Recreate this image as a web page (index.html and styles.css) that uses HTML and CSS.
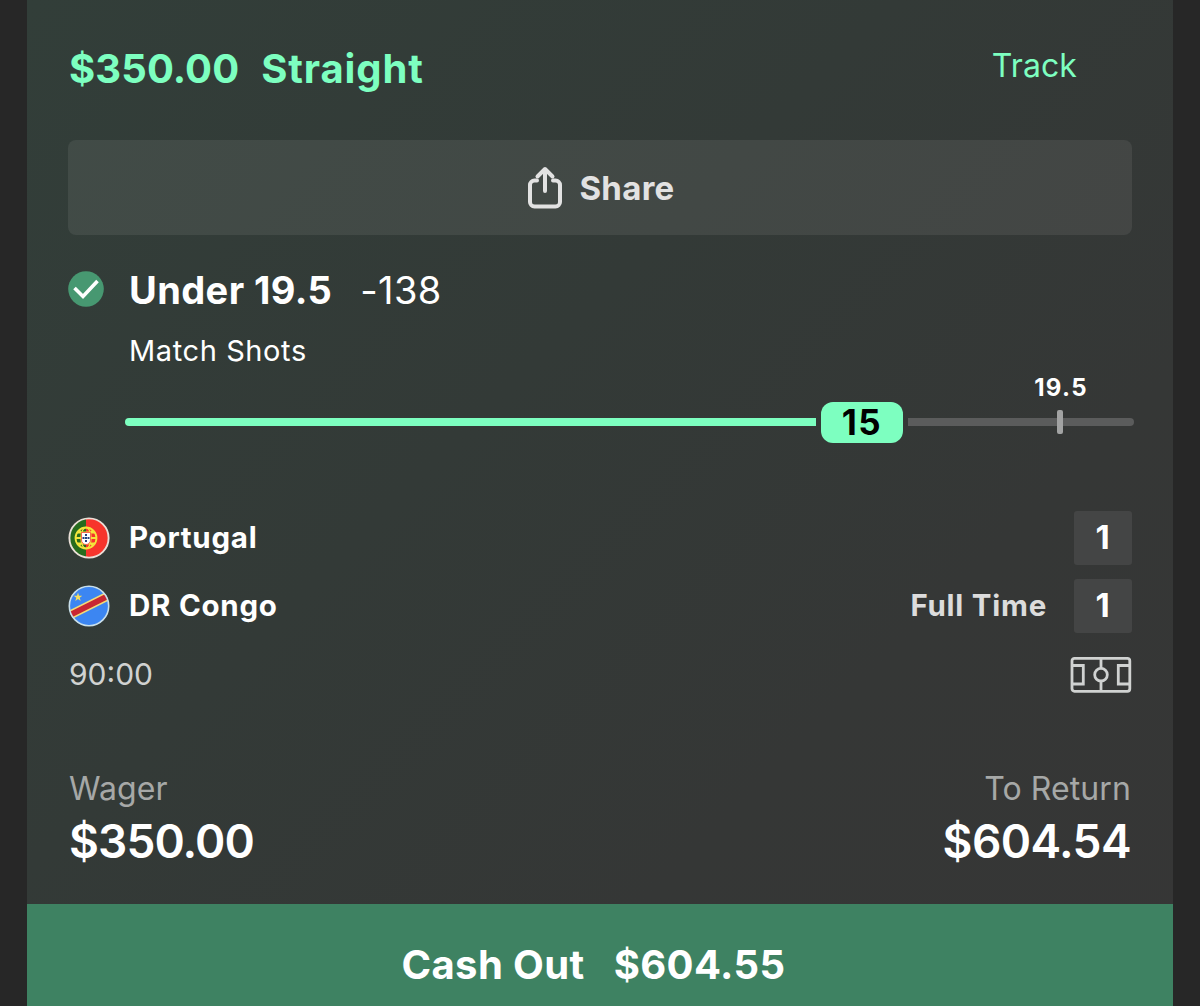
FILE: index.html
```
<!DOCTYPE html>
<html lang="en">
<head>
    <meta charset="UTF-8">
    <meta name="viewport" content="width=device-width, initial-scale=1.0">
    <title>My Bets</title>
    <link rel="stylesheet" href="styles.css">
</head>
<body>
    <div class="card">
        <div class="content">
            <header class="header">
                <h1><span class="stake">$350.00</span><span class="type">Straight</span></h1>
                <a class="track-link">Track</a>
            </header>

            <button class="share">
                <svg width="36" height="44" viewBox="0 0 36 44" fill="none" stroke="#e2e2e2" stroke-width="4" stroke-linecap="round" stroke-linejoin="round">
                    <path d="M10 14.500H7.500a4.500 4.500 0 0 0-4.500 4.500V36a4.500 4.500 0 0 0 4.500 4.500h21a4.500 4.500 0 0 0 4.500-4.500V19a4.500 4.500 0 0 0-4.500-4.500H26"/>
                    <path d="M18 25V3.500M10.500 10.500L18 3l7.500 7.500"/>
                </svg>
                <span>Share</span>
            </button>

            <section class="selection">
                <svg class="check" width="36" height="36" viewBox="0 0 36 36">
                    <circle cx="18" cy="18" r="17.800" fill="#479871"/>
                    <path d="M6.500 17l8.500 8.500L29.500 10" fill="none" stroke="#fff" stroke-width="3.600"/>
                </svg>
                <div class="pick"><strong>Under 19.5</strong><span class="odds">-138</span></div>
                <div class="market">Match Shots</div>
            </section>

            <div class="progress">
                <div class="fill"></div>
                <div class="current">15</div>
                <div class="rest">
                    <div class="target"><span>19.5</span></div>
                </div>
            </div>

            <section class="match">
                <div class="team">
                    <svg class="flag" width="42" height="42" viewBox="0 0 42 42">
                        <clipPath id="round"><circle cx="21" cy="21" r="20"/></clipPath>
                        <g clip-path="url(#round)">
                            <rect width="42" height="42" fill="#f7342c"/>
                            <rect width="18" height="42" fill="#276b1e"/>
                            <g fill="none" stroke="#f4e53c">
                                <circle cx="18" cy="21" r="10.500" stroke-width="1.800"/>
                                <ellipse cx="18" cy="21" rx="5" ry="10.500" stroke-width="1.300"/>
                                <path d="M8 21h20M9 15.500h18M9 26.500h18M11 13l14 16M25 13L11 29" stroke-width="1.800"/>
                            </g>
                            <path d="M13.500 15.500h9V23a4.500 4.500 0 0 1-9 0z" fill="#fff" stroke="#f7342c" stroke-width="0.700"/>
                            <path d="M17 17h2v2h-2zM17 20h2v2h-2zM17 23h2v2h-2zM14.500 20h2v2h-2zM19.500 20h2v2h-2z" fill="#26437f"/>
                        </g>
                        <circle cx="21" cy="21" r="19.600" fill="none" stroke="#e9dfd8" stroke-width="1.900"/>
                    </svg>
                    <span class="name">Portugal</span>
                    <span class="score">1</span>
                </div>
                <div class="team">
                    <svg class="flag" width="42" height="42" viewBox="0 0 42 42">
                        <g clip-path="url(#round)">
                            <rect width="42" height="42" fill="#3c86f2"/>
                            <path d="M-2 32L44 9" stroke="#f3dc77" stroke-width="9"/>
                            <path d="M-2 32L44 9" stroke="#c92732" stroke-width="6"/>
                            <path d="M10 7.500l1 3.200h3.300l-2.600 2 1 3.300-2.700-2-2.700 2 1-3.300-2.600-2H9z" fill="#f6df5d"/>
                        </g>
                        <circle cx="21" cy="21" r="19.700" fill="none" stroke="#c9dfe9" stroke-width="1.600"/>
                    </svg>
                    <span class="name">DR Congo</span>
                    <span class="status">Full Time</span>
                    <span class="score">1</span>
                </div>
                <div class="clock">
                    <span>90:00</span>
                    <svg width="62" height="37" viewBox="0 0 62 37" fill="none" stroke="#d0d2d1" stroke-width="2.800">
                        <rect x="2" y="2.300" width="57.800" height="33" rx="2.500"/>
                        <path d="M31 2v10M31 25.500V35M2.500 9.500h10.800v18.500H2.500M59.500 9.500H48.300v18.500H59.500"/>
                        <circle cx="31" cy="18.700" r="6.300"/>
                    </svg>
                </div>
            </section>

            <section class="totals">
                <div class="total">
                    <div class="label">Wager</div>
                    <div class="amount">$350.00</div>
                </div>
                <div class="total right">
                    <div class="label">To Return</div>
                    <div class="amount">$604.54</div>
                </div>
            </section>
        </div>

        <button class="cash-out"><span>Cash Out</span><span>$604.55</span></button>
    </div>
</body>
</html>
```

FILE: styles.css
```
* {
    box-sizing: border-box;
}
body {
    margin: 0;
    height: 1006px;
    overflow: hidden;
    background-color: #272727;
    color: #fff;
    font-family: Inter, sans-serif;
}
button {
    border: none;
    font-family: inherit;
    cursor: pointer;
}
.card {
    width: 1146px;
    margin: 0 auto 0 27px;
    background: linear-gradient(135deg, #323e39 0%, #333a37 40%, #353736 70%, #363636 100%);
}
.content {
    height: 904px;
    padding: 0 41px;
}
.header {
    display: flex;
    justify-content: space-between;
    height: 140px;
    padding-left: 1px;
    line-height: 137px;
    color: #7dffc0;
}
.header h1 {
    display: flex;
    gap: 22px;
    margin: 0;
    font-size: 40px;
    font-weight: 650;
}
.stake {
    letter-spacing: 0.1px;
}
.type {
    letter-spacing: 0.9px;
}
.track-link {
    margin-right: 55px;
    font-size: 32px;
    line-height: 132px;
    letter-spacing: 0.1px;
}
.share {
    display: flex;
    align-items: center;
    justify-content: center;
    gap: 16px;
    width: 100%;
    height: 95px;
    padding: 0 4px 0 6px;
    border-radius: 8px;
    background-color: rgba(255, 255, 255, 0.075);
    color: #e2e2e2;
    font-size: 33px;
    font-weight: 650;
    letter-spacing: 0.3px;
}
.selection {
    display: grid;
    grid-template-columns: 61px 1fr;
    grid-template-rows: 60px 60px;
    margin-top: 25px;
    line-height: 60px;
}
.check {
    margin-top: 11px;
}
.pick {
    display: flex;
    gap: 28px;
    font-size: 38px;
}
.pick strong {
    font-weight: 700;
    letter-spacing: 0.4px;
}
.odds {
    font-weight: 400;
    letter-spacing: 0.4px;
}
.market {
    grid-column: 2;
    font-size: 29px;
    line-height: 62px;
    letter-spacing: 0.6px;
}
.progress {
    display: flex;
    align-items: center;
    height: 42px;
    margin: 21px -2px 0 57px;
}
.fill {
    width: 691px;
    height: 8px;
    border-radius: 4px 0 0 4px;
    background-color: #7dffc0;
}
.current {
    width: 82px;
    height: 41px;
    margin: 0 5px;
    border-radius: 12px;
    background-color: #7dffc0;
    color: #000;
    font-size: 35px;
    font-weight: 700;
    line-height: 40px;
    letter-spacing: 1.5px;
    text-align: center;
}
.rest {
    position: relative;
    flex: 1;
    height: 8px;
    border-radius: 0 4px 4px 0;
    background-color: #5b5c5c;
}
.target {
    position: absolute;
    left: 149px;
    top: -8px;
    display: flex;
    justify-content: center;
    width: 6px;
    height: 24px;
    border-radius: 2px;
    background-color: #a2a3a3;
}
.target span {
    position: absolute;
    top: -37px;
    padding-left: 2px;
    font-size: 24px;
    font-weight: 650;
    line-height: 30px;
    letter-spacing: 1.3px;
}
.match {
    display: flex;
    flex-direction: column;
    gap: 14px;
    margin-top: 68px;
    font-size: 30px;
}
.team {
    display: flex;
    align-items: center;
    height: 54px;
    font-size: 29.5px;
    font-weight: 650;
    letter-spacing: 0.75px;
}
.flag {
    margin-right: 19px;
}
.name {
    flex: 1;
    padding-bottom: 2px;
}
.status {
    margin-right: 27px;
    padding-bottom: 2px;
    color: #dcdcdc;
}
.score {
    width: 58px;
    height: 54px;
    border-radius: 3px;
    background-color: #444545;
    font-size: 33px;
    line-height: 53px;
    text-align: center;
}
.clock {
    display: flex;
    align-items: center;
    justify-content: space-between;
    height: 54px;
    padding-left: 1px;
    color: #d0d2d1;
}
.totals {
    display: flex;
    justify-content: space-between;
    margin-top: 68px;
    padding: 0 1px;
}
.right {
    text-align: right;
}
.label {
    color: #a6a8a7;
    font-size: 32px;
    line-height: 40px;
    letter-spacing: 0.1px;
}
.amount {
    font-size: 46px;
    font-weight: 600;
    line-height: 64px;
    letter-spacing: -0.9px;
}
.right .amount {
    letter-spacing: -0.6px;
}
.cash-out {
    display: flex;
    align-items: center;
    justify-content: center;
    gap: 29px;
    width: 100%;
    height: 122px;
    padding: 0 19px 2px 6px;
    background-color: #3e8262;
    color: #fff;
    font-size: 40px;
    font-weight: 650;
    letter-spacing: 0.4px;
}
```
